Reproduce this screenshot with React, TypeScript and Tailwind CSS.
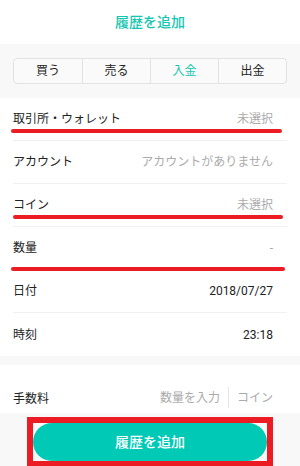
import React from 'react';

const rows = [
  { label: '取引所・ウォレット', value: '未選択', muted: true },
  { label: 'アカウント', value: 'アカウントがありません', muted: true },
  { label: 'コイン', value: '未選択', muted: true },
  { label: '数量', value: '-', muted: true },
  { label: '日付', value: '2018/07/27', muted: false },
  { label: '時刻', value: '23:18', muted: false },
];

const tabs = ['買う', '売る', '入金', '出金'];

const App = () => {
  return (
    <div
      className="w-[300px] h-[466px] overflow-hidden bg-white text-[#222]"
      style={{ fontFamily: 'Roboto, "Noto Sans CJK JP", sans-serif' }}
    >
      {/* Header */}
      <div className="h-[44px] flex items-center justify-center">
        <span className="text-[14px] font-medium text-[#14c6b1]">履歴を追加</span>
      </div>

      {/* Segmented control */}
      <div className="h-[54px] bg-[#f8f8f8] px-[13px] pt-[14px]">
        <div className="grid grid-cols-4 h-[26px] border border-[#e2e2e2] rounded-[4px] bg-[#fafafa]">
          {tabs.map((t, i) => (
            <div
              key={t}
              className={`flex items-center justify-center text-[12px] ${i > 0 ? 'border-l border-[#e2e2e2]' : ''} ${
                t === '入金' ? 'text-[#14c6b1]' : 'text-[#222]'
              }`}
            >
              {t}
            </div>
          ))}
        </div>
      </div>

      {/* List */}
      <div className="relative px-[13px]">
        {rows.map((r, i) => (
          <div
            key={r.label}
            className={`h-[43px] flex items-center justify-between ${i < rows.length - 1 ? 'border-b border-[#f0f0f0]' : ''}`}
          >
            <span className="text-[12px] text-[#222]">{r.label}</span>
            <span className={`text-[12px] pr-[14px] ${r.muted ? 'text-[#aaa]' : 'text-[#222]'}`}>{r.value}</span>
          </div>
        ))}

        {/* red annotation strokes */}
        <div className="absolute left-[11px] w-[271px] top-[31px] h-[4px] rounded-full bg-[#ec1c24]" />
        <div className="absolute left-[13px] w-[270px] top-[117px] h-[4px] rounded-full bg-[#ec1c24]" />
        <div className="absolute left-[11px] w-[274px] top-[169px] h-[4px] rounded-full bg-[#ec1c24]" />
      </div>

      <div className="h-[9px] bg-[#f8f8f8]" />

      {/* Fee */}
      <div className="h-[48px] px-[13px] pb-[5px] flex items-end justify-between">
        <span className="text-[12px] leading-[18px] text-[#222]">手数料</span>
        <div className="flex items-center pr-[14px] text-[12px] leading-[18px] text-[#aaa]">
          <span>数量を入力</span>
          <span className="mx-[8px] w-px h-[21px] bg-[#e6e6e6]" />
          <span>コイン</span>
        </div>
      </div>

      {/* Bottom button */}
      <div className="h-[54px] bg-[#f8f8f8] pt-[4px] px-[27px]">
        <div className="border-[6px] border-[#ec1c24] h-[50px]">
          <button className="w-full h-[38px] rounded-full bg-[#00c9b6] text-white text-[14px] font-medium">
            履歴を追加
          </button>
        </div>
      </div>
    </div>
  );
};

export default App;
